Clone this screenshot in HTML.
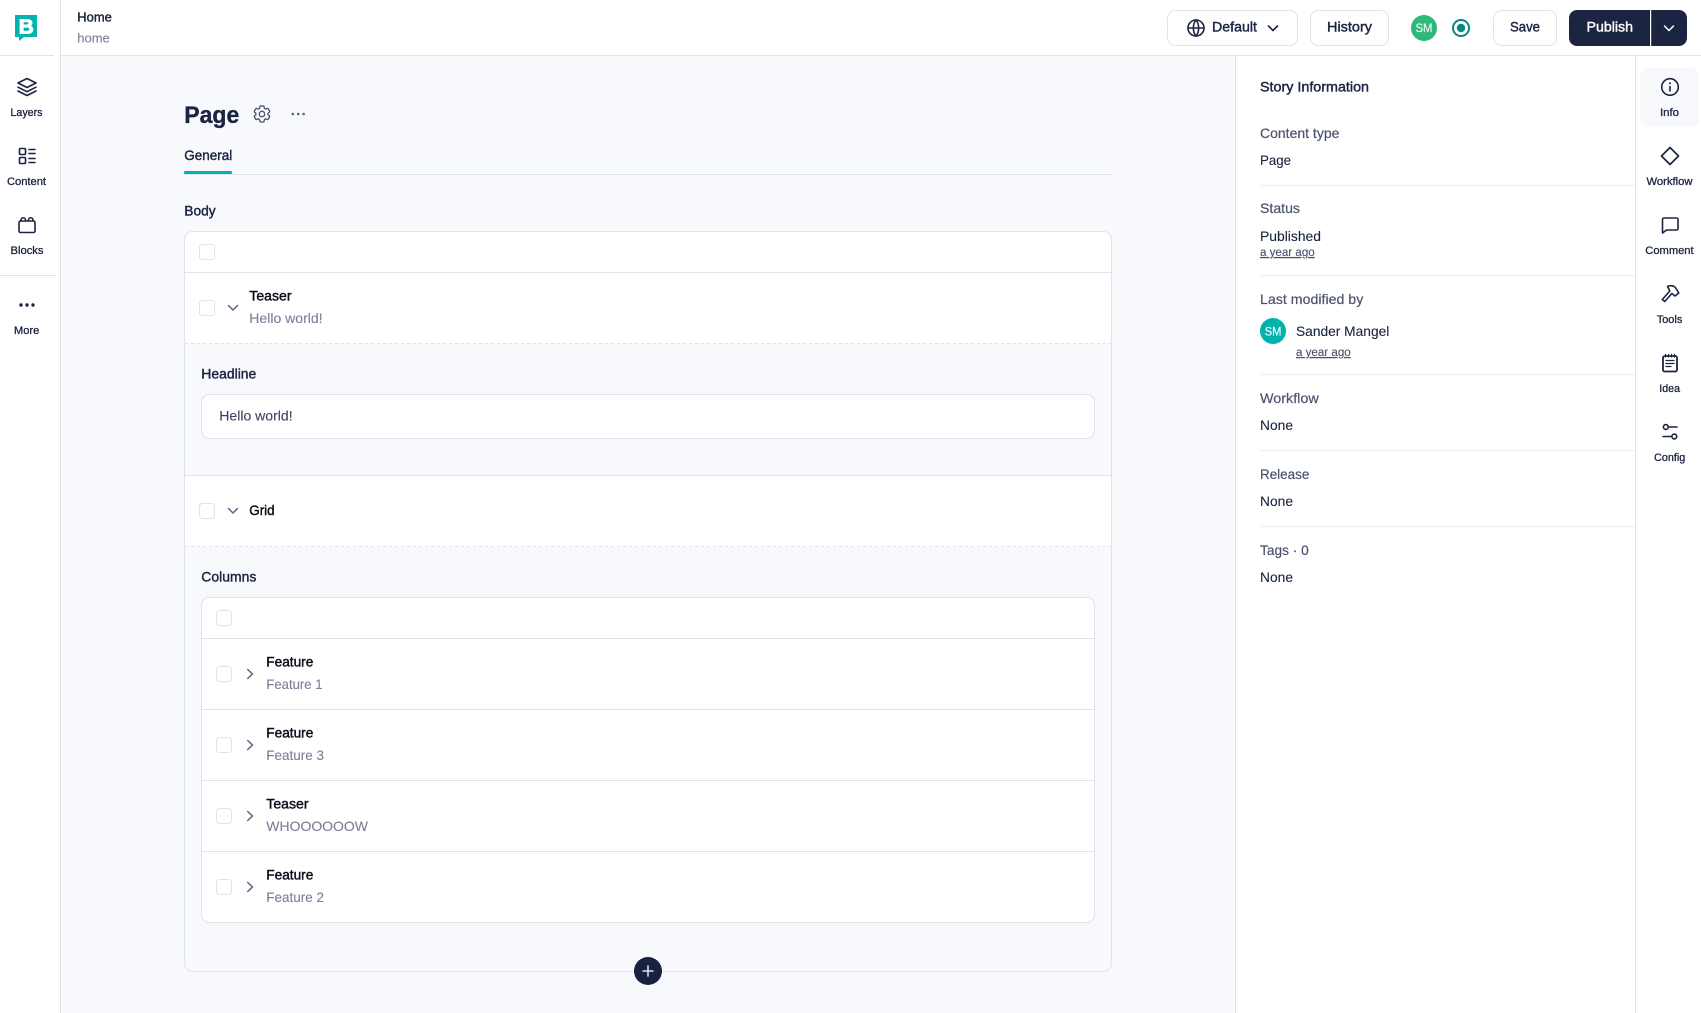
<!DOCTYPE html>
<html lang="en"><head><meta charset="utf-8"><title>Home</title>
<style>
html,body{margin:0;padding:0;width:1701px;height:1013px;overflow:hidden;background:#fff}
svg{position:absolute;left:0;top:0;display:block}
text{font-family:"Liberation Sans",sans-serif;font-size:14px;stroke-width:.12px;transform:translateY(-.5px)}
.m{stroke-width:.42px}
.d{fill:#1b2440;stroke:#1b2440}
.k{fill:#0a0e1a;stroke:#0a0e1a}
.s{fill:#4b5270;stroke:#4b5270}
.g{fill:#7b8099;stroke:#7b8099}
.w{fill:#fff;stroke:#fff}
.t{font-size:11px;stroke-width:.3px}
.i{fill:none;stroke:#1b2440;stroke-width:1.6;stroke-linecap:round;stroke-linejoin:round}
.c{fill:#fff;stroke:#e1e3ea;stroke-width:1}
.l{stroke:#e1e3ea;stroke-width:1;fill:none}
.ll{stroke:#ebedf1;stroke-width:1;fill:none}
.ch{fill:none;stroke:#5c6280;stroke-width:1.5;stroke-linecap:round;stroke-linejoin:round}
</style></head>
<body>
<svg width="1701" height="1013" viewBox="0 0 1701 1013" xmlns="http://www.w3.org/2000/svg">
<rect x="60" y="55" width="1176" height="958" fill="#f8f9fd"/>
<path class="l" d="M60.500 0V1013M0 55.500H54M60 55.500H1701M0 275.500H56M1235.500 55V1013M1635.500 55V1013"/>

<!-- logo -->
<path d="M15 15H37V37H24L19 41V37H15Z" fill="#00b3ac"/>
<text class="w" x="18.800" y="33.800" textLength="15" lengthAdjust="spacingAndGlyphs" font-weight="700" style="font-size:20px;stroke-width:1px">B</text>

<!-- left rail -->
<g class="i">
<path d="M27 78.500L36 83L27 87.500L18 83Z"/><path d="M18 87.200L27 91.700L36 87.200"/><path d="M18 91L27 95.500L36 91"/>
<rect x="19.500" y="148.500" width="6" height="6" rx="1"/><rect x="19.500" y="157.500" width="6" height="6" rx="1"/>
<path d="M29 149.500H35M29 153.500H35M29 158.500H35M29 162.500H35"/>
<rect x="19" y="221" width="16" height="11.500" rx="1.500"/>
<path d="M21 221V220A2 2 0 0 1 25.500 220V221M28.500 221V220A2 2 0 0 1 33 220V221"/>
</g>
<g fill="#1b2440"><circle cx="21" cy="305" r="1.700"/><circle cx="27" cy="305" r="1.700"/><circle cx="33" cy="305" r="1.700"/></g>
<text class="d t" x="10.500" y="116.500" textLength="32" lengthAdjust="spacingAndGlyphs">Layers</text>
<text class="d t" x="7" y="185.500" textLength="39" lengthAdjust="spacingAndGlyphs">Content</text>
<text class="d t" x="10.500" y="254.500" textLength="33" lengthAdjust="spacingAndGlyphs">Blocks</text>
<text class="d t" x="14" y="334.500" textLength="25.300" lengthAdjust="spacingAndGlyphs">More</text>

<!-- header -->
<text class="d m" x="77.300" y="22" textLength="34.500" lengthAdjust="spacingAndGlyphs" style="font-size:12.500px">Home</text>
<text class="g" x="77.300" y="43" textLength="32.500" lengthAdjust="spacingAndGlyphs" style="font-size:13px">home</text>

<rect class="c" x="1167.500" y="10.500" width="130" height="35" rx="8"/>
<circle class="i" cx="1196" cy="28" r="8"/><path class="i" d="M1188 28H1204M1196 20C1192.500 24 1192.500 32 1196 36M1196 20C1199.500 24 1199.500 32 1196 36" stroke-width="1.300"/>
<text class="d m" x="1212" y="32" textLength="45" lengthAdjust="spacingAndGlyphs">Default</text>
<path class="i" d="M1268.500 26L1273 30.500L1277.500 26" stroke-width="1.500"/>
<rect class="c" x="1310.500" y="10.500" width="78" height="35" rx="8"/>
<text class="d m" x="1327" y="32" textLength="45" lengthAdjust="spacingAndGlyphs">History</text>
<circle cx="1424" cy="28" r="13" fill="#2db87c"/>
<text fill="#e4f7ef" stroke="#e4f7ef" style="font-size:12px;stroke-width:.25px" x="1415.500" y="32.500" textLength="17" lengthAdjust="spacingAndGlyphs">SM</text>
<circle cx="1461" cy="28" r="8" fill="none" stroke="#0b887c" stroke-width="2"/><circle cx="1461" cy="28" r="4.200" fill="#0b887c"/>
<rect class="c" x="1493.500" y="10.500" width="63" height="35" rx="8"/>
<text class="d m" x="1510" y="32" textLength="30" lengthAdjust="spacingAndGlyphs">Save</text>
<rect x="1569" y="10" width="118" height="36" rx="8" fill="#1b2440"/>
<rect x="1650" y="10" width="1.200" height="36" fill="#fff"/>
<text class="w m" x="1586.500" y="32" textLength="46.500" lengthAdjust="spacingAndGlyphs">Publish</text>
<path d="M1664.500 26L1669 30.500L1673.500 26" fill="none" stroke="#fff" stroke-width="1.500" stroke-linecap="round" stroke-linejoin="round"/>

<!-- page title -->
<text class="d" x="184.300" y="123.500" textLength="55" lengthAdjust="spacingAndGlyphs" font-weight="700" style="font-size:24px;stroke-width:.35px">Page</text>
<g transform="translate(251.300 103.300) scale(.89)" fill="none" stroke="#4b5270" stroke-width="1.500" stroke-linejoin="round">
<path d="M9.594 3.94c.09-.542.56-.94 1.11-.94h2.593c.55 0 1.02.398 1.11.94l.213 1.281c.063.374.313.686.645.87.074.04.147.083.22.127.325.196.72.257 1.075.124l1.217-.456a1.125 1.125 0 0 1 1.37.49l1.296 2.247a1.125 1.125 0 0 1-.26 1.431l-1.003.827c-.293.241-.438.613-.43.992a7.723 7.723 0 0 1 0 .255c-.008.378.137.75.43.991l1.004.827c.424.35.534.955.26 1.43l-1.298 2.247a1.125 1.125 0 0 1-1.369.491l-1.217-.456c-.355-.133-.75-.072-1.076.124a6.47 6.47 0 0 1-.22.128c-.331.183-.581.495-.644.869l-.213 1.281c-.09.543-.56.94-1.11.94h-2.594c-.55 0-1.019-.398-1.11-.94l-.213-1.281c-.062-.374-.312-.686-.644-.87a6.52 6.52 0 0 1-.22-.127c-.325-.196-.72-.257-1.076-.124l-1.217.456a1.125 1.125 0 0 1-1.369-.49l-1.297-2.247a1.125 1.125 0 0 1 .26-1.431l1.004-.827c.292-.24.437-.613.43-.991a6.932 6.932 0 0 1 0-.255c.007-.38-.138-.751-.43-.992l-1.004-.827a1.125 1.125 0 0 1-.26-1.43l1.297-2.247a1.125 1.125 0 0 1 1.37-.491l1.216.456c.356.133.751.072 1.076-.124.072-.044.146-.086.22-.128.332-.183.582-.495.644-.869l.214-1.28Z"/>
<circle cx="12" cy="12" r="3"/></g>
<g fill="#5a607a"><circle cx="292.800" cy="114" r="1.300"/><circle cx="298.200" cy="114" r="1.300"/><circle cx="303.600" cy="114" r="1.300"/></g>
<text class="d m" x="184.300" y="160.500" textLength="48" lengthAdjust="spacingAndGlyphs">General</text>
<path class="l" d="M184 174.500H1112"/>
<rect x="184" y="171" width="48" height="3" rx="1" fill="#00b3ac"/>
<text class="d m" x="184.300" y="216" textLength="31.300" lengthAdjust="spacingAndGlyphs">Body</text>

<!-- outer card -->
<rect x="184.500" y="231.500" width="927" height="740" rx="8" fill="#f8f9fd" stroke="#e1e3ea"/>
<path d="M185 272H1111V343H185Z" fill="#fff"/>
<path d="M193 232H1103A8 8 0 0 1 1111 240V272H185V240A8 8 0 0 1 193 232Z" fill="#fff"/>
<path d="M185 476H1111V546H185Z" fill="#fff"/>
<path class="l" d="M185 272.500H1111M185 475.500H1111"/>
<path class="l" stroke-dasharray="3 3" d="M185 343.500H1111M185 546.500H1111"/>
<rect class="c" x="199.500" y="244.500" width="15" height="15" rx="3"/>
<rect class="c" x="199.500" y="300.500" width="15" height="15" rx="3"/>
<path class="ch" d="M228.500 305.500L233 310L237.500 305.500"/>
<text class="k m" x="249.300" y="301" textLength="42.300" lengthAdjust="spacingAndGlyphs">Teaser</text>
<text class="g" x="249.300" y="323.500" textLength="73.300" lengthAdjust="spacingAndGlyphs">Hello world!</text>
<text class="d m" x="201.300" y="379" textLength="55" lengthAdjust="spacingAndGlyphs">Headline</text>
<rect class="c" x="201.500" y="394.500" width="893" height="44" rx="8"/>
<text class="s" style="fill:#3a4160" x="219.300" y="421" textLength="73.300" lengthAdjust="spacingAndGlyphs">Hello world!</text>
<rect class="c" x="199.500" y="503.500" width="15" height="15" rx="3"/>
<path class="ch" d="M228.500 508.500L233 513L237.500 508.500"/>
<text class="k m" x="249.300" y="515.500" textLength="25.300" lengthAdjust="spacingAndGlyphs">Grid</text>
<text class="d m" x="201.300" y="582" textLength="55" lengthAdjust="spacingAndGlyphs">Columns</text>

<!-- inner card -->
<rect class="c" x="201.500" y="597.500" width="893" height="325" rx="8"/>
<path class="l" d="M202 638.500H1094M202 709.500H1094M202 780.500H1094M202 851.500H1094"/>
<rect class="c" x="216.500" y="610.500" width="15" height="15" rx="3"/>
<rect class="c" x="216.500" y="666.500" width="15" height="15" rx="3"/>
<rect class="c" x="216.500" y="737.500" width="15" height="15" rx="3"/>
<rect class="c" x="216.500" y="808.500" width="15" height="15" rx="3"/>
<rect class="c" x="216.500" y="879.500" width="15" height="15" rx="3"/>
<path class="ch" d="M247.700 669.500L252.500 674L247.700 678.500M247.700 740.500L252.500 745L247.700 749.500M247.700 811.500L252.500 816L247.700 820.500M247.700 882.500L252.500 887L247.700 891.500"/>
<text class="k m" x="266.300" y="667" textLength="47" lengthAdjust="spacingAndGlyphs">Feature</text>
<text class="g" x="266.300" y="689.500" textLength="56.300" lengthAdjust="spacingAndGlyphs">Feature 1</text>
<text class="k m" x="266.300" y="738" textLength="47" lengthAdjust="spacingAndGlyphs">Feature</text>
<text class="g" x="266.300" y="760.500" textLength="57.700" lengthAdjust="spacingAndGlyphs">Feature 3</text>
<text class="k m" x="266.300" y="809" textLength="42.300" lengthAdjust="spacingAndGlyphs">Teaser</text>
<text class="g" x="266.300" y="831.500" textLength="101.700" lengthAdjust="spacingAndGlyphs">WHOOOOOOW</text>
<text class="k m" x="266.300" y="880" textLength="47" lengthAdjust="spacingAndGlyphs">Feature</text>
<text class="g" x="266.300" y="902.500" textLength="57.700" lengthAdjust="spacingAndGlyphs">Feature 2</text>

<circle cx="648" cy="971" r="14" fill="#18223f"/>
<path d="M648 966V976M643 971H653" stroke="#dfe1e8" stroke-width="1.600" stroke-linecap="round"/>

<!-- info panel -->
<text class="d m" x="1260" y="92" textLength="109" lengthAdjust="spacingAndGlyphs">Story Information</text>
<text class="s" style="stroke-width:.2px" x="1260" y="138.500" textLength="79.400" lengthAdjust="spacingAndGlyphs">Content type</text>
<text class="d" x="1260" y="165.500" textLength="31" lengthAdjust="spacingAndGlyphs">Page</text>
<path class="ll" d="M1260 185.500H1635M1260 275.500H1635M1260 374.500H1635M1260 450.500H1635M1260 526.500H1635"/>
<text class="s" style="stroke-width:.2px" x="1260" y="213.500" textLength="40" lengthAdjust="spacingAndGlyphs">Status</text>
<text class="d" x="1260" y="241.500" textLength="61" lengthAdjust="spacingAndGlyphs">Published</text>
<text class="s" x="1260" y="256.500" textLength="54.700" lengthAdjust="spacingAndGlyphs" text-decoration="underline" style="font-size:11.500px">a year ago</text>
<text class="s" style="stroke-width:.2px" x="1260" y="304.500" textLength="103.300" lengthAdjust="spacingAndGlyphs">Last modified by</text>
<circle cx="1273" cy="331" r="13" fill="#00b3ac"/>
<text fill="#eafafa" stroke="#eafafa" style="font-size:12px;stroke-width:.25px" x="1264.700" y="336" textLength="16.700" lengthAdjust="spacingAndGlyphs">SM</text>
<text class="d" x="1296" y="336.500" textLength="93.300" lengthAdjust="spacingAndGlyphs">Sander Mangel</text>
<text class="s" x="1296" y="356.500" textLength="54.700" lengthAdjust="spacingAndGlyphs" text-decoration="underline" style="font-size:11.500px">a year ago</text>
<text class="s" style="stroke-width:.2px" x="1260" y="403.500" textLength="58.700" lengthAdjust="spacingAndGlyphs">Workflow</text>
<text class="d" x="1260" y="430.500" textLength="33" lengthAdjust="spacingAndGlyphs">None</text>
<text class="s" style="stroke-width:.2px" x="1260" y="479.500" textLength="49.300" lengthAdjust="spacingAndGlyphs">Release</text>
<text class="d" x="1260" y="506.500" textLength="33" lengthAdjust="spacingAndGlyphs">None</text>
<text class="s" style="stroke-width:.2px" x="1260" y="555.500" textLength="48.700" lengthAdjust="spacingAndGlyphs">Tags · 0</text>
<text class="d" x="1260" y="582.500" textLength="33" lengthAdjust="spacingAndGlyphs">None</text>

<!-- right rail -->
<rect x="1640" y="68" width="59" height="59" rx="8" fill="#f8f9fd"/>
<g class="i">
<circle cx="1670" cy="87" r="8.300"/><path d="M1670 86.500V91"/>
<path d="M1670 147.500L1678.500 156L1670 164.500L1661.500 156Z" stroke-width="1.700"/>
<path d="M1662.500 233V219.500A1.500 1.500 0 0 1 1664 218H1676.500A1.500 1.500 0 0 1 1678 219.500V228.500A1.500 1.500 0 0 1 1676.500 230H1666.500Z"/>
<path d="M1667.500 286.500C1670.500 285 1674.500 285.500 1676 288.500L1678.800 293L1675 296L1671.800 293.500L1664.800 301.500L1662.300 299.500L1669.800 291Z"/>
<rect x="1663" y="356" width="14" height="15.500" rx="1.800" stroke-width="1.800"/>
<path d="M1665.500 354.500V357M1668.500 354.500V357M1671.500 354.500V357M1674.500 354.500V357" stroke-width="1.200"/>
<path d="M1666 360.500H1674M1666 363.500H1674M1666 366.500H1671" stroke-width="1.300"/>
<circle cx="1665.800" cy="427" r="2.400"/><path d="M1668.500 427H1677"/>
<circle cx="1674.300" cy="436.500" r="2.400"/><path d="M1663 436.500H1671.500"/>
</g>
<circle cx="1670" cy="83.200" r="1" fill="#1b2440"/>
<text class="d t" x="1660" y="116.500" textLength="19" lengthAdjust="spacingAndGlyphs">Info</text>
<text class="d t" x="1646.500" y="185.500" textLength="46" lengthAdjust="spacingAndGlyphs">Workflow</text>
<text class="d t" x="1645.300" y="254.500" textLength="48.300" lengthAdjust="spacingAndGlyphs">Comment</text>
<text class="d t" x="1656.700" y="323.500" textLength="25.700" lengthAdjust="spacingAndGlyphs">Tools</text>
<text class="d t" x="1659.300" y="392.500" textLength="20.700" lengthAdjust="spacingAndGlyphs">Idea</text>
<text class="d t" x="1654" y="461.500" textLength="31.300" lengthAdjust="spacingAndGlyphs">Config</text>
</svg>
</body></html>
